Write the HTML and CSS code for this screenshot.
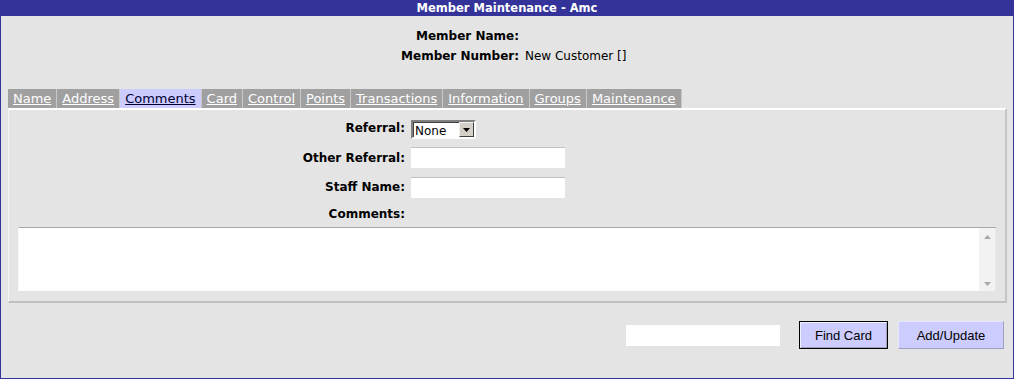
FILE: index.html
```html
<!DOCTYPE html>
<html>
<head>
<meta charset="utf-8">
<link rel="stylesheet" href="styles.css">
</head>
<body>
<div class="window">
  <div class="titlebar">Member Maintenance - Amc</div>
  <div class="header">
    <div class="hlabel">Member Name:</div><div class="hvalue"></div>
    <div class="hlabel">Member Number:</div><div class="hvalue">New Customer []</div>
  </div>
  <div class="tabs">
    <a class="tab">Name</a>
    <a class="tab">Address</a>
    <a class="tab active">Comments</a>
    <a class="tab">Card</a>
    <a class="tab">Control</a>
    <a class="tab">Points</a>
    <a class="tab">Transactions</a>
    <a class="tab">Information</a>
    <a class="tab">Groups</a>
    <a class="tab">Maintenance</a>
  </div>
  <div class="panel">
    <div class="form">
      <div class="flabel">Referral:</div>
      <div class="fcell">
        <div class="select"><span class="sel-text">None</span><span class="sel-btn"><svg width="7" height="4" viewBox="0 0 7 4"><path d="M0 0H7L3.5 4Z" fill="#000"/></svg></span></div>
      </div>
      <div class="flabel">Other Referral:</div>
      <div class="fcell"><div class="input"></div></div>
      <div class="flabel r3">Staff Name:</div>
      <div class="fcell r3"><div class="input"></div></div>
      <div class="flabel">Comments:</div>
      <div class="fcell"></div>
    </div>
    <div class="textarea">
      <div class="ta-body"></div>
      <div class="scroll">
        <svg width="7" height="4" viewBox="0 0 7 4"><path d="M0 4H7L3.5 0Z" fill="#a8a8a8"/></svg>
        <svg width="7" height="4" viewBox="0 0 7 4"><path d="M0 0H7L3.5 4Z" fill="#a8a8a8"/></svg>
      </div>
    </div>
  </div>
  <div class="actions">
    <div class="input search"></div>
    <button class="btn default">Find Card</button>
    <button class="btn">Add/Update</button>
  </div>
</div>
</body>
</html>
```
FILE: styles.css
```css
html, body {
  margin: 0;
  padding: 0;
  background: #ffffff;
}
body {
  font-family: "DejaVu Sans", Verdana, sans-serif;
  font-size: 12px;
  color: #000;
}
.window {
  width: 1012px;
  height: 378px;
  border: 1px solid #333399;
  border-top: 0;
  background: #e4e4e4;
  display: flex;
  flex-direction: column;
}
.titlebar {
  height: 16px;
  line-height: 16px;
  background: #333399;
  color: #fff;
  font-weight: bold;
  font-size: 11.5px;
  text-align: center;
  margin: 0 -1px;
}
.header {
  display: grid;
  grid-template-columns: 518px 1fr;
  column-gap: 6px;
  padding-top: 10px;
}
.hlabel {
  text-align: right;
  font-weight: bold;
  height: 20px;
  line-height: 20px;
}
.hvalue {
  height: 20px;
  line-height: 20px;
}
.tabs {
  display: flex;
  margin: 23px 0 0 7px;
  height: 19px;
}
.tab {
  display: block;
  height: 19px;
  line-height: 19px;
  font-size: 13px;
  padding: 0 5px;
  background: #a0a0a0;
  color: #ffffff;
  text-decoration: underline;
  border-right: 1px solid #c8c8c8;
}
.tab.active {
  background: #ccccff;
  color: #000033;
}
.panel {
  margin: 0 6px 0 7px;
  height: 191px;
  border-top: 2px solid #ffffff;
  border-left: 1px solid #f4f4f4;
  border-right: 2px solid #c4c4c4;
  border-bottom: 2px solid #c0c0c0;
  display: flex;
  flex-direction: column;
}
.form {
  display: grid;
  grid-template-columns: 396px 1fr;
  grid-template-rows: 19px 21px 21px 18px;
  column-gap: 6px;
  row-gap: 8px;
  padding-top: 10px;
}
.flabel {
  text-align: right;
  font-weight: bold;
  display: flex;
  align-items: center;
  justify-content: flex-end;
}
.flabel:first-child {
  align-items: flex-start;
  padding-top: 1px;
}
.fcell {
  display: flex;
  align-items: center;
}
.r3 {
  margin-top: 1px;
}
.select {
  width: 59px;
  height: 15px;
  border: 2px solid;
  border-color: #808080 #ffffff #ffffff #808080;
  box-shadow: inset 1px 1px 0 #404040;
  background: #fff;
  display: flex;
  align-items: center;
  justify-content: space-between;
  padding-left: 2px;
  font-size: 12px;
  line-height: 15px;
}
.sel-text {
  padding-top: 3px;
}
.sel-btn {
  width: 15px;
  height: 15px;
  box-sizing: border-box;
  background: #d4d0c8;
  border: 1px solid;
  border-color: #f0f0f0 #404040 #404040 #f0f0f0;
  display: flex;
  align-items: center;
  justify-content: center;
}
.input {
  width: 154px;
  height: 21px;
  box-sizing: border-box;
  background: #fff;
  border-top: 1px solid #c0c0c0;
}
.textarea {
  margin: 4px 9px 0 9px;
  height: 63px;
  display: flex;
  background: #fff;
  border-top: 1px solid #a8a8a8;
  border-left: 1px solid #f8f8f8;
}
.ta-body {
  flex: 1;
}
.scroll {
  width: 16px;
  background: #f2f2f2;
  display: flex;
  flex-direction: column;
  justify-content: space-between;
  align-items: center;
  padding: 7px 0 5px;
  border-right: 1px solid #e8e8e8;
}
.actions {
  display: flex;
  justify-content: flex-end;
  align-items: center;
  margin-top: 18px;
  padding-right: 9px;
}
.search {
  margin-right: 19px;
  border-top: 0;
}
.btn {
  height: 28px;
  box-sizing: border-box;
  background: #ccccff;
  font-family: "Liberation Sans", Arial, sans-serif;
  font-size: 13px;
  color: #000;
  padding: 0;
  margin: 0;
  border: 1px solid;
  border-color: #e6e6ff #a0a0c0 #a0a0c0 #e6e6ff;
  width: 106px;
}
.btn.default {
  width: 89px;
  border: 1px solid #000;
  box-shadow: inset 1px 1px 0 #f0f0ff, inset -1px -1px 0 #a0a0c0;
  margin-right: 10px;
}
```
